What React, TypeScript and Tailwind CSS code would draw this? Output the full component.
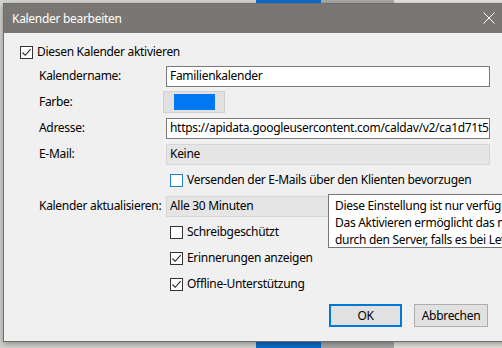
import React from "react";

const font = { fontFamily: '"Noto Sans", "Open Sans", sans-serif' };

function CheckBox({ checked, blue }: { checked?: boolean; blue?: boolean }) {
  return (
    <div
      className={
        "w-[13px] h-[13px] bg-white border flex items-center justify-center shrink-0 " +
        (blue ? "border-[#1f7fd0]" : "border-[#333333]")
      }
    >
      {checked && (
        <svg width="11" height="11" viewBox="0 0 11 11">
          <path d="M1.5 5.5 L4.2 8.3 L9.6 2.2" fill="none" stroke="#222" strokeWidth="1.1" />
        </svg>
      )}
    </div>
  );
}

function Row({ label, children }: { label?: string; children?: React.ReactNode }) {
  return (
    <div className="h-[26px] flex items-center pl-[35px]">
      <div className="w-[127px] shrink-0 whitespace-nowrap">{label}</div>
      {children}
    </div>
  );
}

function CheckRow({ text, checked, blue }: { text: string; checked?: boolean; blue?: boolean }) {
  return (
    <Row>
      <div className="flex items-center gap-[4px] ml-[4px] whitespace-nowrap">
        <CheckBox checked={checked} blue={blue} />
        <span>{text}</span>
      </div>
    </Row>
  );
}

export default function App() {
  return (
    <div className="relative w-[502px] h-[348px] overflow-hidden text-[12px] tracking-[-0.3px] text-black" style={font}>
      {/* program behind the dialog */}
      <div className="flex h-full">
        <div className="w-[256px] bg-[#d3d3cf]"></div>
        <div className="w-[65px] bg-[#0b6ccc]"></div>
        <div className="w-[73px] bg-[#a8a8a6]"></div>
        <div className="flex-1 bg-[#e4e4dc]"></div>
      </div>

      {/* dialog window */}
      <div className="absolute left-[3px] top-[3px] w-[530px] h-[339px] bg-[#f0f0f0] border border-[#6f6f6f] shadow-[0_2px_6px_rgba(0,0,0,0.35)] flex flex-col">
        <div className="h-[29px] bg-[#7a7673] text-white flex items-center pl-[8px] shrink-0 relative">
          <span>Kalender bearbeiten</span>
          <svg className="absolute left-[479px] top-[8px]" width="12" height="12" viewBox="0 0 12 12">
            <path d="M0.5 0.5 L11.5 11.5 M11.5 0.5 L0.5 11.5" stroke="white" strokeWidth="1" />
          </svg>
        </div>

        <div className="pt-[8px] flex flex-col">
          <div className="h-[22px] flex items-center gap-[4px] pl-[16px]">
            <CheckBox checked />
            <span>Diesen Kalender aktivieren</span>
          </div>

          <Row label="Kalendername:">
            <div className="w-[324px] h-[21px] bg-white border border-[#7a7a7a] flex items-center px-[3px]">
              Familienkalender
            </div>
          </Row>

          <Row label="Farbe:">
            <div className="-ml-[3px] w-[62px] h-[22px] bg-[#e1e1e1] border border-[#d0d0d0] flex items-center justify-center">
              <div className="w-[41px] h-[16px] bg-[#0078f2]"></div>
            </div>
          </Row>

          <Row label="Adresse:">
            <div className="w-[324px] h-[21px] bg-white border border-[#7a7a7a] flex items-center px-[3px] overflow-hidden whitespace-nowrap">
              https://apidata.googleusercontent.com/caldav/v2/ca1d71t5
            </div>
          </Row>

          <Row label="E-Mail:">
            <div className="w-[324px] h-[21px] bg-[#e5e5e5] border border-[#d6d6d6] flex items-center px-[3px]">
              Keine
            </div>
          </Row>

          <CheckRow text="Versenden der E-Mails über den Klienten bevorzugen" blue />

          <Row label="Kalender aktualisieren:">
            <div className="w-[324px] h-[21px] bg-[#e5e5e5] border border-[#d6d6d6] flex items-center px-[3px]">
              Alle 30 Minuten
            </div>
          </Row>

          <CheckRow text="Schreibgeschützt" />
          <CheckRow text="Erinnerungen anzeigen" checked />
          <CheckRow text="Offline-Unterstützung" checked />

          <div className="flex gap-[12px] pl-[325px] mt-[7px]">
            <button className="w-[73px] h-[23px] bg-[#e1e1e1] border-2 border-[#0078d7] flex items-center justify-center">
              OK
            </button>
            <button className="w-[74px] h-[23px] bg-[#e1e1e1] border border-[#adadad] flex items-center justify-center">
              Abbrechen
            </button>
          </div>
        </div>
      </div>

      {/* tooltip */}
      <div className="absolute left-[328px] top-[194px] w-[320px] h-[54px] bg-white border border-[#767676] pl-[6px] pt-[2px] leading-[17px] whitespace-nowrap">
        <div>Diese Einstellung ist nur verfügbar, wenn der Kalender nicht schreibgeschützt ist.</div>
        <div>Das Aktivieren ermöglicht das nochmalige Laden von Terminen</div>
        <div>durch den Server, falls es bei Letzterem zu Änderungen kam.</div>
      </div>
    </div>
  );
}
